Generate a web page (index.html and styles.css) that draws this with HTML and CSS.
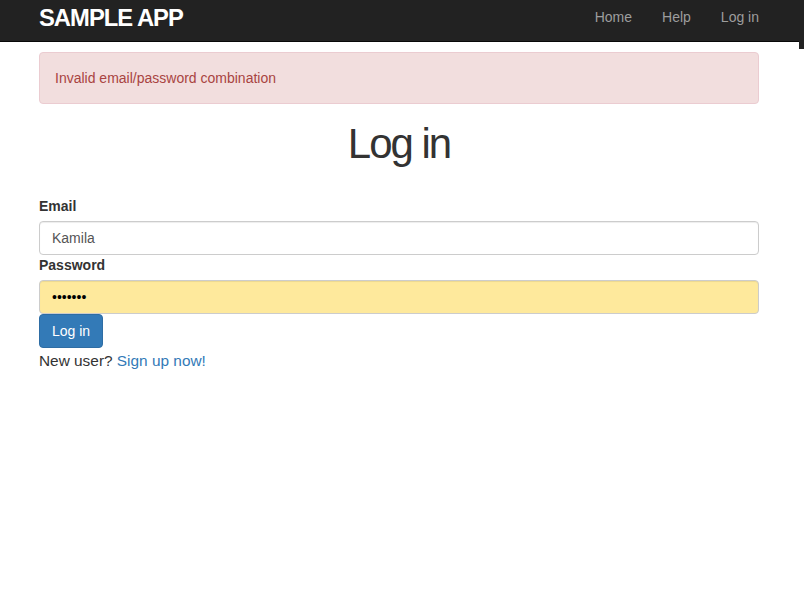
FILE: index.html
```html
<!DOCTYPE html>
<html>
<head>
<meta charset="utf-8">
<title>Log in | Sample App</title>
<link rel="stylesheet" href="styles.css">
</head>
<body>
<header class="navbar">
  <div class="container navbar-inner">
    <a class="logo" href="#">Sample app</a>
    <ul class="nav">
      <li><a href="#">Home</a></li>
      <li><a href="#">Help</a></li>
      <li><a href="#">Log in</a></li>
    </ul>
  </div>
  <div class="edge"></div>
</header>
<main class="container">
  <div class="alert">Invalid email/password combination</div>
  <h1 class="title">Log in</h1>
  <form class="login-form">
    <label class="field-label" for="email">Email</label>
    <input class="form-control" id="email" type="email" value="Kamila">
    <label class="field-label" for="password">Password</label>
    <input class="form-control autofilled" id="password" type="password" value="1234567">
    <button class="btn" type="button">Log in</button>
  </form>
  <p class="signup">New user? <a href="#">Sign up now!</a></p>
</main>
</body>
</html>
```
FILE: styles.css
```css
* { box-sizing: border-box; }
html, body { margin: 0; padding: 0; }
body {
  font-family: "Liberation Sans", Arial, Helvetica, sans-serif;
  font-size: 14px;
  line-height: 20px;
  color: #333;
  background: #fff;
}
a { text-decoration: none; }

.container {
  width: 720px;
  margin-left: 39px;
}

.navbar {
  position: relative;
  height: 42px;
  background: #222;
  border-bottom: 1px solid #080808;
}
.navbar-inner {
  display: flex;
  justify-content: space-between;
  align-items: flex-start;
}
.logo {
  display: block;
  padding-top: 6px;
  font-size: 23.8px;
  line-height: 1;
  font-weight: bold;
  color: #fff;
  text-transform: uppercase;
  letter-spacing: -1px;
}
.nav {
  display: flex;
  list-style: none;
  margin: 0 -15px 0 0;
  padding: 0;
}
.nav a {
  display: block;
  padding: 7px 15px 14px;
  color: #9d9d9d;
}
.edge {
  position: absolute;
  right: 0;
  top: 41px;
  width: 5px;
  height: 8px;
  background: #222;
}

.alert {
  margin-top: 10px;
  margin-bottom: 17px;
  padding: 15px;
  border: 1px solid #ebccd1;
  border-radius: 4px;
  background: #f2dede;
  color: #a94442;
}

.title {
  margin: 0 0 29px;
  font-size: 42px;
  line-height: 46.2px;
  font-weight: normal;
  letter-spacing: -2px;
  text-align: center;
  color: #333;
}

.login-form {
  display: flex;
  flex-direction: column;
  align-items: flex-start;
}
.field-label {
  display: inline-block;
  margin-bottom: 5px;
  font-weight: bold;
}
.form-control {
  display: block;
  width: 100%;
  height: 34px;
  padding: 6px 12px;
  font-family: inherit;
  font-size: 14px;
  line-height: 20px;
  color: #555;
  background: #fff;
  border: 1px solid #ccc;
  border-radius: 4px;
  box-shadow: inset 0 1px 1px rgba(0,0,0,.075);
  outline: none;
}
.autofilled {
  background: #fee99c;
  color: #000;
}
.btn {
  display: inline-block;
  height: 34px;
  padding: 6px 12px;
  font-family: inherit;
  font-size: 14px;
  line-height: 20px;
  color: #fff;
  background: #337ab7;
  border: 1px solid #2e6da4;
  border-radius: 4px;
  cursor: pointer;
}

.signup {
  margin: 0;
  font-size: 15.4px;
  line-height: 26.18px;
}
.signup a { color: #337ab7; }
```
